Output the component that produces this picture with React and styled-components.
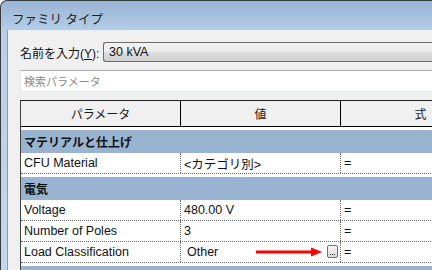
import styled, { createGlobalStyle } from 'styled-components';

const GlobalStyle = createGlobalStyle`
  html, body {
    margin: 0;
    padding: 0;
    width: 432px;
    height: 270px;
    overflow: hidden;
    background: #ffffff;
  }
  body {
    font-family: "Liberation Sans", "Noto Sans CJK JP", sans-serif;
    font-size: 12px;
    color: #1a1a1a;
  }
`;

const groups = [
  {
    name: 'マテリアルと仕上げ',
    rows: [{ param: 'CFU Material', value: '<カテゴリ別>' }],
  },
  {
    name: '電気',
    rows: [
      { param: 'Voltage', value: '480.00 V' },
      { param: 'Number of Poles', value: '3' },
      { param: 'Load Classification', value: 'Other', picker: true },
    ],
  },
  { name: '識別情報', rows: [] },
];

export default function App() {
  return (
    <>
      <GlobalStyle />
      <Window>
        <TitleBar>ファミリ タイプ</TitleBar>
        <Content>
          <NameRow>
            <Label>
              名前を入力(<u>Y</u>):
            </Label>
            <Combo>30 kVA</Combo>
          </NameRow>
          <Search>検索パラメータ</Search>
          <Table>
            <HeaderRow>
              <HeaderCell>パラメータ</HeaderCell>
              <HeaderCell>値</HeaderCell>
              <HeaderCell>式</HeaderCell>
            </HeaderRow>
            {groups.map(group => (
              <div key={group.name}>
                <GroupRow>{group.name}</GroupRow>
                {group.rows.map(row => (
                  <DataRow key={row.param}>
                    <Cell>{row.param}</Cell>
                    <Cell $indent={row.picker}>
                      {row.value}
                      {row.picker && (
                        <Picker>
                          <Arrow width="66" height="10" viewBox="0 0 66 10">
                            <rect x="0" y="3.5" width="58" height="3" fill="#ff0000" />
                            <polygon points="55,0.5 66,5 55,9.5" fill="#ff0000" />
                          </Arrow>
                          <DotButton>
                            <Dot />
                            <Dot />
                            <Dot />
                          </DotButton>
                        </Picker>
                      )}
                    </Cell>
                    <Cell>=</Cell>
                  </DataRow>
                ))}
              </div>
            ))}
          </Table>
        </Content>
      </Window>
    </>
  );
}

const Window = styled.div`
  width: 560px;
  height: 300px;
  display: flex;
  flex-direction: column;
  border-top: 1px solid #3a3a3a;
  border-left: 1px solid #3a3a3a;
  border-top-left-radius: 7px;
  background: linear-gradient(#98b4d3 0px, #b6cfe9 30px, #c2daf0 100%);
  padding-left: 6px;
`;

const TitleBar = styled.div`
  height: 29px;
  display: flex;
  align-items: center;
  padding: 6px 0 0 5px;
  box-sizing: border-box;
  font-size: 12.5px;
  color: #1e1e1e;
`;

const Content = styled.div`
  flex: 1;
  background: #f0f0f0;
  border-left: 1px solid #8e9aa8;
  padding: 12px 0 0 12px;
  display: flex;
  flex-direction: column;
`;

const NameRow = styled.div`
  display: flex;
  align-items: center;
  height: 20px;
`;

const Label = styled.div`
  width: 83px;
  font-size: 12px;
  color: #111;
  u {
    text-decoration: underline;
  }
`;

const Combo = styled.div`
  flex: 1;
  height: 18px;
  border: 1px solid #6a6a6a;
  border-right: none;
  border-radius: 3px 0 0 3px;
  background: linear-gradient(#f2f2f2 0%, #ebebeb 50%, #dddddd 51%, #cfcfcf 100%);
  padding-left: 5px;
  display: flex;
  align-items: center;
  font-size: 12.5px;
  color: #111;
`;

const Search = styled.div`
  margin-top: 8px;
  height: 20px;
  background: #ffffff;
  border-top: 1px solid #abadb3;
  border-left: 1px solid #e2e3ea;
  border-bottom: 1px solid #e3e9ef;
  padding-left: 3px;
  display: flex;
  align-items: center;
  font-size: 11px;
  color: #8a8a8a;
`;

const Table = styled.div`
  margin-top: 8px;
  flex: 1;
  background: #ffffff;
  border-top: 1px solid #202020;
  border-left: 1px solid #404040;
`;

const HeaderRow = styled.div`
  display: grid;
  grid-template-columns: 160px 160px 160px;
  height: 25px;
  background: #f0f0f0;
  border-bottom: 1px solid #000;
`;

const HeaderCell = styled.div`
  border-right: 1px solid #000;
  display: flex;
  align-items: center;
  justify-content: center;
  font-size: 12px;
  color: #1a1a1a;
`;

const GroupRow = styled.div`
  margin-top: 3px;
  height: 23px;
  background: #99b4d1;
  display: flex;
  align-items: center;
  padding-left: 3px;
  font-weight: bold;
  font-size: 12px;
  color: #111;
`;

const DataRow = styled.div`
  display: grid;
  grid-template-columns: 160px 160px 160px;
  height: 21px;
  border-bottom: 1px dotted #6a6a6a;
  box-sizing: border-box;
`;

const Cell = styled.div`
  display: flex;
  align-items: center;
  padding-left: ${p => (p.$indent ? '6px' : '3px')};
  padding-right: 2px;
  border-right: 1px dotted #6a6a6a;
  font-size: 12.5px;
  color: #111;
  &:last-child {
    border-right: none;
  }
`;

const Picker = styled.div`
  margin-left: auto;
  display: flex;
  align-items: center;
  gap: 5px;
`;

const Arrow = styled.svg`
  display: block;
`;

const DotButton = styled.div`
  width: 9px;
  height: 9px;
  border: 1px solid #707070;
  border-radius: 2px;
  background: linear-gradient(#f6f6f6, #dadada);
  display: flex;
  align-items: flex-end;
  justify-content: center;
  gap: 1px;
  padding-bottom: 2px;
  box-sizing: content-box;
  margin-top: -2px;
`;

const Dot = styled.span`
  width: 1px;
  height: 1px;
  background: #333;
`;
